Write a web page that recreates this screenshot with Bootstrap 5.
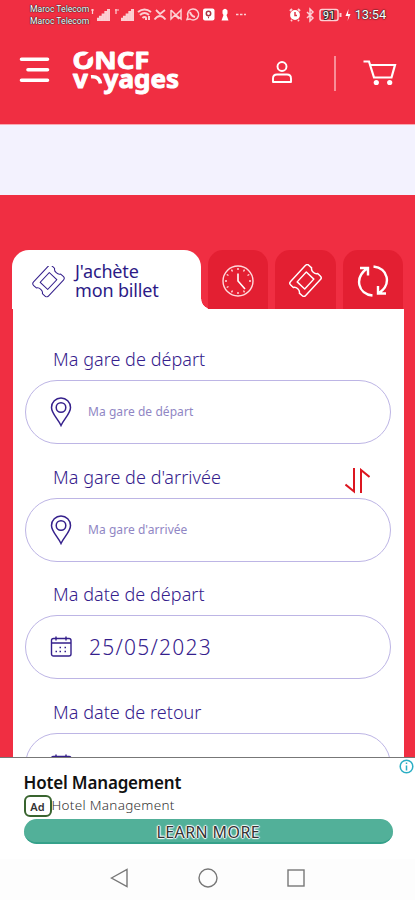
<!DOCTYPE html>
<html lang="fr">
<head>
<meta charset="utf-8">
<meta name="viewport" content="width=device-width, initial-scale=1">
<title>ONCF Voyages</title>
<link href="https://cdn.jsdelivr.net/npm/bootstrap@5.3.0/dist/css/bootstrap.min.css" rel="stylesheet">
<style>
:root{--brand:#f02e42;--brand-dark:#e31f32;--ink:#35208c;--line:#bdb5e5}
body{font-family:"Noto Sans","Open Sans",sans-serif;background:var(--brand);color:var(--ink);height:900px;overflow:hidden}
svg{display:block;flex:none}
.screen{height:900px;width:415px}
.status{height:30px;padding:3px 29px 0 30px;color:#fff}
.carrier{font:8.6px/12px Roboto,sans-serif;color:#fff;text-shadow:0 0 1px #222,0 0 1px #222,0 0 1px #222;width:61px;white-space:nowrap}
.clock{font:12.8px/24px Roboto,sans-serif;text-shadow:0 0 1px #222,0 0 1px #222,0 0 2px #222;letter-spacing:-.1px}
.alerts{margin-right:3px}
.topbar{height:94px;padding:14px 17px 0 19px}
.user-icon{margin-right:41px}
.divider{width:2px;height:35px;background:#f98d98}
.band{height:71px;background:#f3f2fe;border-top:1px solid #f9a9b2}
.tabs{height:59px;margin:55px 12px 0 12px;gap:7px}
.tab-on{width:189px;background:#fff;border-radius:17px 17px 0 0;padding:12px 0 0 20px;gap:10px}
.tab-on::after{content:"";position:absolute;left:100%;bottom:0;width:10px;height:10px;background:radial-gradient(circle at 100% 0,var(--brand) 9.3px,#fff 10px);clip-path:inset(0 3px 0 0)}
.tab-title{font-size:18px;line-height:18.5px;color:#2c1a86;letter-spacing:-.15px;white-space:nowrap}
.tab-off{width:60.5px;background:var(--brand-dark);border-radius:15px 15px 0 0;padding-top:2px}
.panel{height:448px;margin:0 11.5px 0 12.5px;background:#fff;padding:37px 13px 0 12.5px;overflow:hidden}
.flabel{height:34px;font-size:18px;line-height:27px;font-weight:300;letter-spacing:.04px;padding-left:28px;padding-right:21px;white-space:nowrap}
.field{height:64px;border:1.5px solid var(--line);border-radius:32px;padding-left:24px;margin-bottom:19.6px}
.hint{font-size:12px;color:#9086c4;margin-left:16px;letter-spacing:.06px}
.dateval{font-size:21px;font-weight:300;margin-left:17px;letter-spacing:1.25px;padding-top:1px}
.ad{height:102px;border-top:1.5px solid #777;background:#fff;color:#111;padding:13px 22px 0 23.5px}
.ad-title{font-size:17px;line-height:24px;font-weight:600;letter-spacing:-.18px;white-space:nowrap}
.ad-tag{width:28px;height:22px;border:2px solid #39642f;border-radius:6px;font-size:11px;line-height:19px;font-weight:600;text-align:center;color:#333}
.ad-sub{font-size:13.5px;line-height:20px;font-weight:300;color:#333;letter-spacing:.3px;white-space:nowrap}
.ad-cta{height:25px;border-radius:13px;background:#52b099;border-bottom:2px solid #35a18a;font-size:16px;line-height:26px;letter-spacing:.4px;color:#333;text-shadow:1px 0 1px #fff,-1px 0 1px #fff,0 1px 1px #fff,0 -1px 1px #fff,0 0 2px #fff;margin-top:1.5px}
.ad-info{position:absolute;right:1px;top:1px}
.sysnav{height:41px;background:#fdfdfd;padding:0 109px 3px 110px}
</style>
<script src="https://cdn.jsdelivr.net/npm/bootstrap@5.3.0/dist/js/bootstrap.bundle.min.js"></script>
</head>
<body>
<svg width="0" height="0" class="position-absolute" aria-hidden="true">
 <symbol id="ticket" viewBox="0 0 32 32"><g transform="rotate(-47 16 16)" fill="none" stroke="currentColor" stroke-linejoin="round"><path d="M5.500 6H26.500Q29 6 29 8.500V12Q27 13 27 16T29 20V23.500Q29 26 26.500 26H5.500Q3 26 3 23.500V20Q5 19 5 16T3 12V8.500Q3 6 5.500 6Z"/><rect x="9.500" y="11" width="13" height="10"/></g></symbol>
 <symbol id="pin" viewBox="0 0 22 30"><g fill="none" stroke="currentColor" stroke-width="1.500"><path d="M11 28.500C8 22 1.500 16.500 1.500 10.500A9.500 9.500 0 0 1 20.500 10.500C20.500 16.500 14 22 11 28.500Z"/><circle cx="11" cy="10.500" r="4.800"/></g></symbol>
 <symbol id="cal" viewBox="0 0 22 22"><g fill="none" stroke="currentColor" stroke-width="1.400"><rect x="1.500" y="2.500" width="19.500" height="17.500" rx="2"/><path d="M1.500 7H21M6 .5V4.500M16 .5V4.500" /><path d="M9.500 11.500h1.500M14.500 11.500h1.500M5.500 15.500h1.500M9.500 15.500h1.500M14.500 15.500h1.500" stroke-width="1.600"/></g></symbol>
 <symbol id="bars" viewBox="0 0 13 12"><path fill="#fbc3c9" d="M0 12V9.500H2V12ZM2.700 12V7.500H4.700V12ZM5.400 12V5.200H7.400V12ZM8.100 12V2.800H10.100V12ZM10.800 12V0H12.800V12Z"/></symbol>
</svg>
<main class="screen d-flex flex-column">
 <div class="status d-flex">
  <div class="carrier">Maroc Telecom<br>Maroc Telecom</div>
  <svg width="155" height="24" viewBox="91 3 155 24" fill="none" stroke="#fcd0d4" stroke-width="1.500">
   <path d="M91 10h3M92.500 9v5M115 10h4M116 9v5" stroke-width="1.200"/>
   <use href="#bars" x="97" y="9" width="13" height="12"/><use href="#bars" x="121" y="9" width="13" height="12"/>
   <path d="M138 12Q144.500 7 151 12M140 15Q144.500 11 149 15M142.500 18Q144.500 16 146.500 18M149 16v4M146 18v2" stroke-width="2"/>
   <path d="M154.500 19.500Q160 12.500 165.500 19.500M156 10l4 4 5-4" stroke-width="1.800"/>
   <path d="M171 10v9l4-4 4 4M171 10l5 5 5-5v9l-5-4"/>
   <path d="M187 19.500l1-3A5.500 5.500 0 1 1 190 19Z"/><path d="M190 12q1 4 5 5" stroke-width="2"/>
   <rect x="203" y="8.500" width="11.500" height="12" rx="2" fill="#fff" stroke="none"/><circle cx="208.500" cy="13.500" r="2.200" stroke="#aa3645"/><path d="M208 17.500h1" stroke="#aa3645"/>
   <path d="M222.500 10.500Q225 7 227.500 10.500V13.500L226.500 15L228.500 20.500H221.500L223.500 15L222.500 13.500Z" fill="#fff" stroke="none"/>
   <path d="M236 14.500h2.500m1.500 0h2.500m1.500 0h2.500"/>
  </svg>
  <svg class="ms-auto alerts" width="64" height="24" viewBox="288 3 64 24" fill="none" stroke="#fcd0d4" stroke-width="1.500">
   <circle cx="295" cy="15" r="4.900" fill="#fff" stroke="none"/><path d="M290 11l2-2M300 11l-2-2M292 20l-1 1M298 20l1 1" stroke-width="2"/><path d="M295 12v3.500h2" stroke="#df3548"/>
   <path d="M307 12l6 6-3 3V9l3 3-6 6"/>
   <rect x="320" y="9.500" width="18" height="11" rx="2"/><path d="M340.500 13v4" stroke-width="2"/>
   <text x="323" y="18.800" font-family="Roboto,sans-serif" font-size="10.500" fill="#fff" stroke="#333" stroke-width="2" paint-order="stroke">91</text>
   <path d="M348.500 9l-3 7h3l-1 5 3-7h-2.500Z" fill="#fff" stroke="none"/>
  </svg>
  <span class="clock">13:54</span>
 </div>
 <header class="topbar d-flex align-items-start">
  <svg width="32" height="56" viewBox="0 0 32 56" stroke="#fff" stroke-width="3.600" stroke-linecap="round"><path d="M2.500 15.200H28.500M9 25.700H28.500M2.500 36.200H28.500"/></svg>
  <svg class="ms-3" width="125" height="56" viewBox="67 44 125 56" fill="#fff" stroke="#fff" stroke-width=".9" stroke-linejoin="round" font-family="'Noto Sans',sans-serif" font-weight="700">
   <text x="72.500" y="68.500" font-size="24" textLength="77" lengthAdjust="spacingAndGlyphs">ONCF</text>
   <text x="73" y="88" font-size="24.500" textLength="106" lengthAdjust="spacingAndGlyphs">v<tspan fill="#f02e42" stroke="#f02e42">o</tspan>yages</text>
   <path d="M84 59L94 52" stroke="#f02e42" stroke-width="5"/>
   <path d="M91 76.800Q99 75.800 100.500 83.500" fill="none" stroke-width="3.600"/>
  </svg>
  <svg class="ms-auto user-icon" width="22" height="56" viewBox="271 44 22 56" fill="none" stroke="#fff" stroke-width="1.900"><circle cx="282" cy="66.500" r="4.500"/><path d="M273 82V78.500Q273 74.500 277 74.500H287Q291 74.500 291 78.500V82Z" stroke-linejoin="round"/></svg>
  <div class="d-flex align-items-start pt-2 flex-shrink-0"><div class="divider mt-1"></div>
  <svg class="ms-4" width="38" height="40" viewBox="360 52 38 40" fill="none" stroke="#fff" stroke-width="2.200"><path d="M363.500 61.500H369L374 77.500H391.500L395 65H370.500"/><circle cx="376.300" cy="82.500" r="2.600" fill="#fff" stroke="none"/><circle cx="389.700" cy="82.500" r="2.600" fill="#fff" stroke="none"/></svg></div>
 </header>
 <div class="band flex-shrink-0"></div>
 <nav class="tabs d-flex flex-shrink-0">
  <div class="tab-on position-relative d-flex align-items-start">
   <svg class="mt-1" width="33" height="33" viewBox="0 1 33 33"><use href="#ticket" y="-.5" width="33" height="33"/></svg>
   <div class="tab-title">J'achète<br>mon billet</div>
  </div>
  <div class="tab-off d-flex align-items-center justify-content-center text-white">
   <svg width="34" height="34" viewBox="0 0 34 34" fill="none" stroke="#ffdadd" stroke-width="1.400"><circle cx="17" cy="17" r="15"/><path d="M17 9.500V17l7 8" stroke="#fff" stroke-width="1.600"/><path d="M17 4v2M17 28v2M4 17h2M28 17h2M10.500 5.700l1 1.800M23.500 5.700l-1 1.800M5.700 10.500l1.800 1M28.300 10.500l-1.800 1M5.700 23.500l1.800-1M10.500 28.300l1-1.800M23.500 28.300l-1-1.800"/></svg>
  </div>
  <div class="tab-off d-flex align-items-center justify-content-center text-white"><svg width="33" height="33" stroke-width="1.400"><use href="#ticket"/></svg></div>
  <div class="tab-off d-flex align-items-center justify-content-center text-white">
   <svg width="34" height="34" viewBox="0 0 34 34" fill="none" stroke="#fff" stroke-width="2.400"><path d="M16.500 31.500C2 30 -2 14 11 4.500M4 4H12V11.500M17.500 2.500C32 4 36 20 23 29M30 29.500H22V22"/></svg>
  </div>
 </nav>
 <form class="panel flex-shrink-0">
  <div class="flabel">Ma gare de départ</div>
  <div class="field d-flex align-items-center"><svg width="22" height="30"><use href="#pin"/></svg><span class="hint">Ma gare de départ</span></div>
  <div class="flabel d-flex justify-content-between"><span>Ma gare de d'arrivée</span>
   <svg class="mt-1" width="25" height="26" viewBox="0 0 25 26" fill="none" stroke="#dc1620" stroke-width="2"><path d="M.5 16.500L9 23.500V0M16 25V2L24.500 9"/></svg></div>
  <div class="field d-flex align-items-center"><svg width="22" height="30"><use href="#pin"/></svg><span class="hint">Ma gare d'arrivée</span></div>
  <div class="flabel">Ma date de départ</div>
  <div class="field d-flex align-items-center"><svg width="22" height="22"><use href="#cal"/></svg><span class="dateval">25/05/2023</span></div>
  <div class="flabel">Ma date de retour</div>
  <div class="field d-flex align-items-center"><svg width="22" height="22"><use href="#cal"/></svg></div>
 </form>
 <section class="ad position-relative flex-shrink-0">
  <div class="ad-title">Hotel Management</div>
  <div class="d-flex"><div class="ad-tag">Ad</div><div class="ad-sub">Hotel Management</div></div>
  <div class="ad-cta text-center">LEARN MORE</div>
  <svg class="ad-info" width="15" height="15" viewBox="0 0 15 15" fill="none" stroke="#2aaec4" stroke-width="1.500"><circle cx="7.500" cy="7.500" r="6.300"/><path d="M7.500 6.500v5M7.500 3.500v1.500"/></svg>
 </section>
 <div class="sysnav d-flex align-items-center justify-content-between flex-shrink-0">
  <svg width="19" height="20" fill="none" stroke="#777" stroke-width="1.400"><path d="M1.500 10L17 1.500V18.500Z"/></svg>
  <svg width="20" height="20" fill="none" stroke="#777" stroke-width="1.400"><circle cx="10" cy="10" r="9"/></svg>
  <svg width="20" height="20" fill="none" stroke="#777" stroke-width="1.400"><rect x="2" y="2" width="16" height="16"/></svg>
 </div>
</main>
</body>
</html>
